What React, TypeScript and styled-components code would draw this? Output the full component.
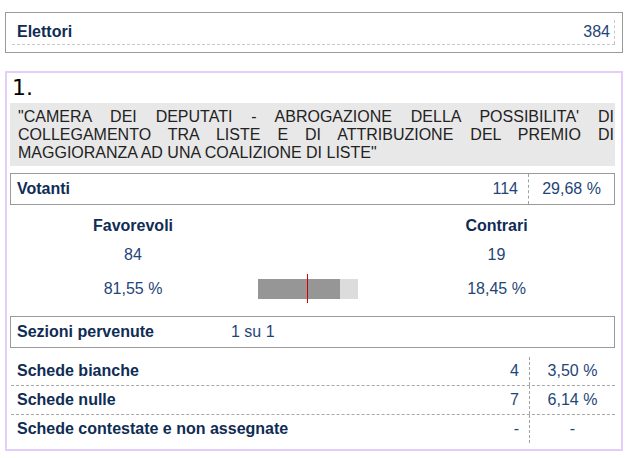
import styled, { createGlobalStyle } from "styled-components";

const GlobalStyle = createGlobalStyle`
  body {
    margin: 0;
    background: #fff;
    font-family: "Liberation Sans", Arial, sans-serif;
  }
`;

const LABEL = "#0f2c55";
const VALUE = "#1f4579";

type Row = { label: string; count: string; pct: string };

const schede: Row[] = [
  { label: "Schede bianche", count: "4", pct: "3,50 %" },
  { label: "Schede nulle", count: "7", pct: "6,14 %" },
  { label: "Schede contestate e non assegnate", count: "-", pct: "-" },
];

const favorevoliPct = 81.55;

const App = () => {
  return (
    <$Page>
      <GlobalStyle />
      <$ElettoriBox>
        <$ElettoriRow>
          <$Label>Elettori</$Label>
          <$ElettoriValue>384</$ElettoriValue>
        </$ElettoriRow>
      </$ElettoriBox>

      <$Card>
        <$Number>1.</$Number>
        <$Question>
          "CAMERA DEI DEPUTATI - ABROGAZIONE DELLA POSSIBILITA' DI COLLEGAMENTO
          TRA LISTE E DI ATTRIBUZIONE DEL PREMIO DI MAGGIORANZA AD UNA
          COALIZIONE DI LISTE"
        </$Question>

        <$FramedRow>
          <$LabelCell>Votanti</$LabelCell>
          <$CountCell>114</$CountCell>
          <$PctCell>29,68 %</$PctCell>
        </$FramedRow>

        <$Results>
          <$ResultHead>Favorevoli</$ResultHead>
          <span />
          <$ResultHead $right>Contrari</$ResultHead>

          <$ResultValue>84</$ResultValue>
          <span />
          <$ResultValue $right>19</$ResultValue>

          <$ResultValue>81,55 %</$ResultValue>
          <$BarCell>
            <$Bar>
              <$BarFill style={{ width: `${favorevoliPct}%` }} />
              <$BarTick />
            </$Bar>
          </$BarCell>
          <$ResultValue $right>18,45 %</$ResultValue>
        </$Results>

        <$FramedRow>
          <$SezioniLabel>Sezioni pervenute</$SezioniLabel>
          <$SezioniValue>1 su 1</$SezioniValue>
        </$FramedRow>

        <$SchedeTable>
          {schede.map((r, i) => (
            <$SchedeRow key={r.label} $last={i === schede.length - 1}>
              <$LabelCell>{r.label}</$LabelCell>
              <$CountCell>{r.count}</$CountCell>
              <$PctCell>{r.pct}</$PctCell>
            </$SchedeRow>
          ))}
        </$SchedeTable>
      </$Card>
    </$Page>
  );
};

const $Page = styled.div`
  width: 618px;
  padding: 12px 0 6px 5px;
`;

const $ElettoriBox = styled.div`
  border: 1px solid #9a9a9a;
  padding: 7px 7px 7px 6px;
`;

const $ElettoriRow = styled.div`
  display: flex;
  align-items: center;
  justify-content: space-between;
  height: 24px;
  border-bottom: 1px dashed #c8c8c8;
`;

const $Label = styled.span`
  font-size: 16px;
  font-weight: bold;
  color: ${LABEL};
  padding-left: 5px;
`;

const $ElettoriValue = styled.span`
  font-size: 16px;
  color: ${VALUE};
  padding-right: 4px;
  border-right: 1px dashed #c8c8c8;
  height: 24px;
  line-height: 24px;
`;

const $Card = styled.div`
  margin-top: 18px;
  border: 2px solid #e3cdfa;
  padding: 0 6px 6px 3px;
`;

const $Number = styled.div`
  font-family: "DejaVu Sans", sans-serif;
  font-size: 22px;
  line-height: 30px;
  color: #000;
  padding-left: 2px;
`;

const $Question = styled.div`
  background: #e8e8e8;
  color: #222;
  font-size: 16px;
  line-height: 18px;
  text-align: justify;
  padding: 5px 1px 4px 8px;
`;

const $FramedRow = styled.div`
  display: flex;
  align-items: stretch;
  height: 30px;
  border: 1px solid #9a9a9a;
  margin-top: 7px;
`;

const $LabelCell = styled.div`
  flex: 1;
  display: flex;
  align-items: center;
  padding-left: 6px;
  font-size: 16px;
  font-weight: bold;
  color: ${LABEL};
`;

const $CountCell = styled.div`
  width: 60px;
  display: flex;
  align-items: center;
  justify-content: flex-end;
  padding-right: 10px;
  font-size: 16px;
  color: ${VALUE};
  border-right: 1px dashed #a0a0a0;
`;

const $PctCell = styled.div`
  width: 85px;
  display: flex;
  align-items: center;
  justify-content: center;
  font-size: 16px;
  color: ${VALUE};
`;

const $Results = styled.div`
  display: grid;
  grid-template-columns: 246px 104px 1fr;
  grid-template-rows: 28px 30px 38px;
  align-items: center;
  padding: 7px 0 1px;
`;

const $ResultHead = styled.div<{ $right?: boolean }>`
  text-align: center;
  font-size: 16px;
  font-weight: bold;
  color: ${LABEL};
  padding-left: ${(p) => (p.$right ? "18px" : "0")};
`;

const $ResultValue = styled.div<{ $right?: boolean }>`
  text-align: center;
  font-size: 16px;
  color: ${VALUE};
  padding-left: ${(p) => (p.$right ? "18px" : "0")};
`;

const $BarCell = styled.div`
  display: flex;
  justify-content: center;
`;

const $Bar = styled.div`
  position: relative;
  width: 100px;
  height: 20px;
  background: #dcdcdc;
`;

const $BarFill = styled.div`
  height: 100%;
  background: #969696;
`;

const $BarTick = styled.div`
  position: absolute;
  left: 49px;
  top: -5px;
  bottom: -4px;
  width: 1px;
  background: #d00000;
`;

const $SezioniLabel = styled.div`
  display: flex;
  align-items: center;
  width: 214px;
  padding-left: 6px;
  font-size: 16px;
  font-weight: bold;
  color: ${LABEL};
`;

const $SezioniValue = styled.div`
  display: flex;
  align-items: center;
  font-size: 16px;
  color: ${VALUE};
`;

const $SchedeTable = styled.div`
  margin-top: 9px;
  padding-left: 1px;
`;

const $SchedeRow = styled.div<{ $last?: boolean }>`
  display: flex;
  height: 28px;
  border-bottom: ${(p) => (p.$last ? "none" : "1px dashed #a8a8a8")};
`;

export default App;
